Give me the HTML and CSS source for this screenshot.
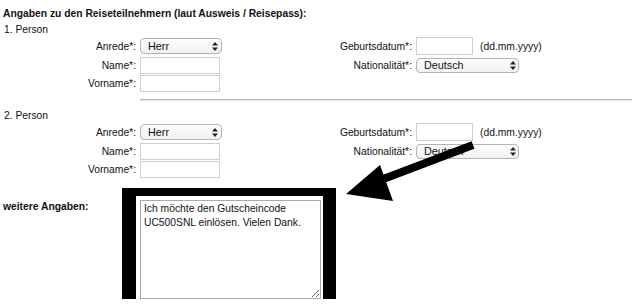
FILE: index.html
```html
<!DOCTYPE html>
<html lang="de">
<head>
  <meta charset="UTF-8">
  <meta name="viewport" content="width=device-width, initial-scale=1.0">
  <title>Reiseteilnehmer</title>
  <link rel="stylesheet" href="styles.css">
</head>
<body>
  <div class="page">
    <h2 class="title">Angaben zu den Reiseteilnehmern (laut Ausweis / Reisepass):</h2>

    <div class="person">
      <div class="person-head">1. Person</div>
      <div class="fields">
        <label class="lbl">Anrede*:</label>
        <div class="sel sel-short">
          <select><option>Herr</option><option>Frau</option></select>
          <svg class="updown" width="6" height="9" viewBox="0 0 6 9"><path d="M3 0L6 3.5H0Z M3 9L6 5.5H0Z" fill="#222"/></svg>
        </div>
        <label class="lbl">Geburtsdatum*:</label>
        <div class="with-hint"><input class="inp inp-date" type="text"><span class="hint">(dd.mm.yyyy)</span></div>

        <label class="lbl">Name*:</label>
        <div><input class="inp" type="text"></div>
        <label class="lbl">Nationalität*:</label>
        <div class="sel sel-long">
          <select><option>Deutsch</option><option>Österreichisch</option></select>
          <svg class="updown" width="6" height="9" viewBox="0 0 6 9"><path d="M3 0L6 3.5H0Z M3 9L6 5.5H0Z" fill="#222"/></svg>
        </div>

        <label class="lbl">Vorname*:</label>
        <div><input class="inp" type="text"></div>
      </div>
    </div>

    <hr class="sep">

    <div class="person">
      <div class="person-head">2. Person</div>
      <div class="fields">
        <label class="lbl">Anrede*:</label>
        <div class="sel sel-short">
          <select><option>Herr</option><option>Frau</option></select>
          <svg class="updown" width="6" height="9" viewBox="0 0 6 9"><path d="M3 0L6 3.5H0Z M3 9L6 5.5H0Z" fill="#222"/></svg>
        </div>
        <label class="lbl">Geburtsdatum*:</label>
        <div class="with-hint"><input class="inp inp-date" type="text"><span class="hint">(dd.mm.yyyy)</span></div>

        <label class="lbl">Name*:</label>
        <div><input class="inp" type="text"></div>
        <label class="lbl">Nationalität*:</label>
        <div class="sel sel-long">
          <select><option>Deutsch</option><option>Österreichisch</option></select>
          <svg class="updown" width="6" height="9" viewBox="0 0 6 9"><path d="M3 0L6 3.5H0Z M3 9L6 5.5H0Z" fill="#222"/></svg>
        </div>

        <label class="lbl">Vorname*:</label>
        <div><input class="inp" type="text"></div>
      </div>
    </div>

    <div class="extra">
      <div class="extra-lbl">weitere Angaben:</div>
      <div class="note-wrap">
        <textarea class="note">Ich möchte den Gutscheincode UC500SNL einlösen. Vielen Dank.</textarea>
        <div class="frame"></div>
      </div>
    </div>
  </div>

  <!-- annotation arrow -->
  <svg class="arrow" width="640" height="306" viewBox="0 0 640 306">
    <line x1="473" y1="145" x2="378" y2="181" stroke="#000" stroke-width="8"/>
    <polygon points="346,194 380,165 393,201" fill="#000"/>
  </svg>
</body>
</html>
```

FILE: styles.css
```css
body {
  margin: 0;
  font-family: "Liberation Sans", Arial, sans-serif;
  font-size: 10.3px;
  color: #111;
  background: #fff;
  overflow: hidden;
}
.page {
  padding: 7px 0 0 3px;
}
.title {
  margin: 0;
  font-size: 10.3px;
  font-weight: bold;
  line-height: 14px;
}
.person-head {
  margin: 2px 0 1px 1px;
  line-height: 14px;
}
.fields {
  display: grid;
  grid-template-columns: 133px 180px 88px auto;
  grid-auto-rows: 17px;
  column-gap: 4px;
  row-gap: 1.5px;
}
.lbl {
  text-align: right;
  line-height: 17px;
  white-space: nowrap;
}
.inp {
  box-sizing: border-box;
  width: 80px;
  height: 17px;
  margin: 0;
  border: 1px solid #cfcfcf;
  background: #fff;
  font: inherit;
  padding: 0 3px;
}
.inp-date {
  width: 57px;
  height: 18px;
  margin-top: -1px;
}
.with-hint {
  display: flex;
  align-items: center;
  gap: 7px;
}
.hint {
  line-height: 17px;
}
.sel {
  position: relative;
  height: 16px;
}
.sel select {
  appearance: none;
  -webkit-appearance: none;
  box-sizing: border-box;
  height: 16px;
  margin: 0;
  border: 1px solid #b4b4b4;
  border-radius: 4px;
  background: linear-gradient(#fdfdfd, #f1f1f1);
  font: inherit;
  font-size: 10.8px;
  color: #111;
  padding: 0 0 0 7px;
}
.sel-short select {
  width: 82px;
}
.sel-long select {
  width: 103px;
  height: 15px;
  margin-top: 1px;
}
.updown {
  position: absolute;
  top: 4px;
  pointer-events: none;
}
.sel-short .updown {
  left: 72px;
}
.sel-long .updown {
  left: 94px;
  top: 4.5px;
}
.sep {
  margin: 7px 8px 8px 137px;
  border: 0;
  border-top: 1px solid #b9b9b9;
  border-bottom: 1px solid #e4e4e4;
}
.extra {
  display: grid;
  grid-template-columns: 133px auto;
  column-gap: 4px;
  margin-top: 22px;
}
.extra-lbl {
  font-weight: bold;
  line-height: 14px;
}
.note-wrap {
  position: relative;
  width: 181px;
}
.note {
  display: block;
  box-sizing: border-box;
  width: 181px;
  height: 99px;
  margin: 0;
  border: 1px solid #a9a9a9;
  padding: 1px 3px;
  font: inherit;
  line-height: 13.5px;
  color: #111;
  resize: both;
}
.frame {
  position: absolute;
  left: -18px;
  right: -15px;
  top: -12px;
  bottom: -10px;
  border-style: solid;
  border-color: #000;
  border-width: 8px 13px 8px 14px;
  pointer-events: none;
}
.arrow {
  position: absolute;
  left: 0;
  top: 0;
  pointer-events: none;
}
```
